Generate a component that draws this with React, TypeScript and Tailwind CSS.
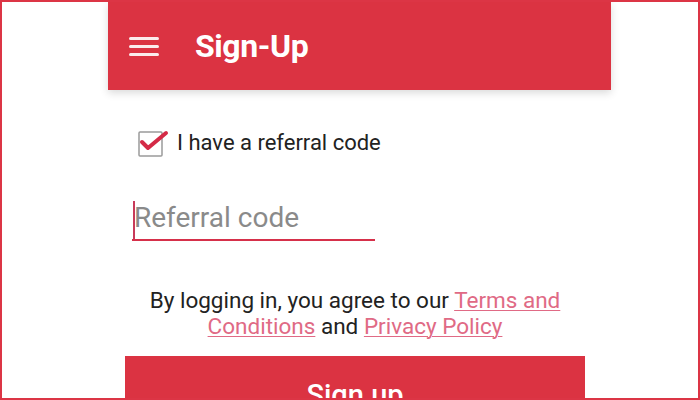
import React from "react";

export default function App() {
  return (
    <div
      className="w-[700px] h-[400px] border-2 border-[#dc3545] bg-white overflow-hidden"
      style={{ fontFamily: "Roboto, 'Noto Sans', sans-serif" }}
    >
      <div className="ml-[106px] w-[503px] h-full flex flex-col">
        <div className="h-[88px] bg-[#db3342] flex items-center shrink-0 shadow-[0_3px_8px_rgba(0,0,0,0.15)] relative z-10">
          <div className="ml-[21px] w-[30px] flex flex-col gap-[5px]">
            <div className="h-[3px] bg-white/90 rounded-sm" />
            <div className="h-[3px] bg-white/90 rounded-sm" />
            <div className="h-[3px] bg-white/90 rounded-sm" />
          </div>
          <div className="ml-[36px] text-white text-[32px] font-bold tracking-[-0.4px] leading-none">Sign-Up</div>
        </div>

        <div className="flex items-center mt-[36px] ml-[29px]">
          <svg width="32" height="32" viewBox="0 0 32 32" className="shrink-0">
            <rect x="2" y="5" width="23" height="24" rx="1" fill="none" stroke="#9a9a9a" strokeWidth="1.5" />
            <path d="M5 15 L11 21 L29 6" fill="none" stroke="#d42a46" strokeWidth="4" strokeLinecap="round" strokeLinejoin="round" />
          </svg>
          <span className="ml-[8px] text-[22px] text-[#222]">I have a referral code</span>
        </div>

        <div className="mt-[38px] ml-[24px] w-[243px] h-[47px] border-b-2 border-[#d6304a] flex items-center relative">
          <div className="absolute left-[1px] top-[4px] w-[2px] h-[38px] bg-[#c83a5a]" />
          <span className="ml-[2px] text-[28px] text-[#8a8a8a]">Referral code</span>
        </div>

        <div className="mt-[46px] ml-[32px] w-[430px] text-center text-[22.5px] leading-[26px] text-[#222]">
          By logging in, you agree to our{" "}
          <span className="text-[#e06a85] underline decoration-1 underline-offset-2">Terms and Conditions</span>{" "}
          and{" "}
          <span className="text-[#e06a85] underline decoration-1 underline-offset-2">Privacy Policy</span>
        </div>

        <div className="mt-[17px] ml-[17px] mr-[26px] h-[80px] bg-[#db3342] flex justify-center pt-[25px] shrink-0">
          <span className="text-white text-[29px] font-medium leading-none">Sign up</span>
        </div>
      </div>
    </div>
  );
}
